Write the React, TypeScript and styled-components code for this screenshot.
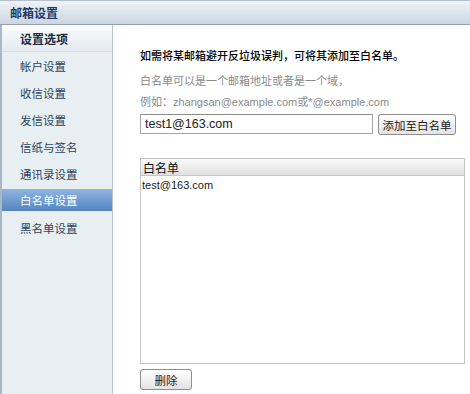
import { createGlobalStyle, styled } from 'styled-components';

const GlobalStyle = createGlobalStyle`
  html, body {
    margin: 0;
    padding: 0;
    background: #ffffff;
  }
  body {
    font-family: 'Liberation Sans', 'Noto Sans CJK SC', sans-serif;
  }
`;

const Page = styled.div`
  width: 470px;
  height: 394px;
  display: grid;
  grid-template-rows: 25px 1fr;
  overflow: hidden;
`;

const TitleBar = styled.div`
  box-sizing: border-box;
  border-top: 1px solid #b3bfca;
  border-bottom: 1px solid #949fab;
  background-color: #dae3eb;
  background-image: linear-gradient(#eef3f7, #cad6e1);
  padding-left: 10px;
  display: flex;
  align-items: center;
`;

const Title = styled.span`
  font-size: 12px;
  font-weight: bold;
  color: #1d3968;
`;

const Body = styled.div`
  display: grid;
  grid-template-columns: 113px 1fr;
  min-height: 0;
`;

const Sidebar = styled.div`
  box-sizing: border-box;
  border-left: 2px solid #a9b8c4;
  border-right: 1px solid #b7c4ce;
  background: #e8eff2;
  display: flex;
  flex-direction: column;
`;

const SideHead = styled.div`
  height: 27px;
  box-sizing: border-box;
  border-bottom: 1px solid #d3dce2;
  background: linear-gradient(#fbfcfd, #e4ebf0);
  padding-left: 18px;
  display: flex;
  align-items: center;
  font-size: 12px;
  font-weight: bold;
  color: #1c2b3b;
`;

const NavItem = styled.div<{ $active?: boolean }>`
  height: ${(p) => (p.$active ? '22px' : '27px')};
  margin: ${(p) => (p.$active ? '2px 0 3px' : '0')};
  padding-left: 18px;
  display: flex;
  align-items: center;
  font-size: 11.5px;
  color: ${(p) => (p.$active ? '#ffffff' : '#2c4360')};
  background: ${(p) => (p.$active ? 'linear-gradient(#8fb5e0, #5584c2)' : 'transparent')};
`;

const Content = styled.div`
  padding: 23px 6px 0 27px;
  display: flex;
  flex-direction: column;
`;

const Lead = styled.div`
  font-size: 11px;
  line-height: 16px;
  color: #000000;
  font-weight: 500;
  margin-bottom: 7px;
`;

const Hint = styled.div`
  font-size: 11px;
  line-height: 21px;
  color: #8a8a8a;
`;

const AddRow = styled.div`
  display: flex;
  gap: 5px;
  margin-top: 1px;
`;

const TextInput = styled.input`
  box-sizing: border-box;
  width: 233px;
  height: 20px;
  border: 1px solid #a6a6a6;
  border-top-color: #8c8c8c;
  padding: 0 4px;
  font-family: 'Liberation Sans', 'Noto Sans CJK SC', sans-serif;
  font-size: 12.5px;
  color: #222222;
  outline: none;
`;

const Button = styled.button<{ $w?: number }>`
  box-sizing: border-box;
  width: ${(p) => (p.$w ? `${p.$w}px` : 'auto')};
  height: 21px;
  padding: 0;
  white-space: nowrap;
  border: 1px solid #8d8d8d;
  border-radius: 3px;
  background: linear-gradient(#ffffff, #e3e3e3);
  font-family: 'Liberation Sans', 'Noto Sans CJK SC', sans-serif;
  font-size: 11.5px;
  color: #1a1a1a;
  cursor: pointer;
`;

const ListBox = styled.div`
  box-sizing: border-box;
  margin-top: 23px;
  width: 325px;
  height: 206px;
  border: 1px solid #c4c4c4;
  display: flex;
  flex-direction: column;
`;

const ListHead = styled.div`
  height: 17px;
  box-sizing: border-box;
  border-bottom: 1px solid #c6c6c6;
  background: linear-gradient(#fafafa, #e0e0e0);
  padding-left: 2px;
  display: flex;
  align-items: center;
  font-size: 12px;
  color: #111111;
`;

const ListItem = styled.div`
  padding: 2px 1px 0;
  font-size: 11px;
  line-height: 14px;
  color: #1a1a1a;
`;

const Footer = styled.div`
  margin-top: 5px;
`;

const navs = ['帐户设置', '收信设置', '发信设置', '信纸与签名', '通讯录设置', '白名单设置', '黑名单设置'];

export default function App() {
  return (
    <Page>
      <GlobalStyle />
      <TitleBar>
        <Title>邮箱设置</Title>
      </TitleBar>
      <Body>
        <Sidebar>
          <SideHead>设置选项</SideHead>
          {navs.map((n) => (
            <NavItem key={n} $active={n === '白名单设置'}>
              {n}
            </NavItem>
          ))}
        </Sidebar>
        <Content>
          <Lead>如需将某邮箱避开反垃圾误判，可将其添加至白名单。</Lead>
          <Hint>白名单可以是一个邮箱地址或者是一个域，</Hint>
          <Hint>例如：zhangsan@example.com或*@example.com</Hint>
          <AddRow>
            <TextInput defaultValue="test1@163.com" />
            <Button $w={78}>添加至白名单</Button>
          </AddRow>
          <ListBox>
            <ListHead>白名单</ListHead>
            <ListItem>test@163.com</ListItem>
          </ListBox>
          <Footer>
            <Button $w={52}>删除</Button>
          </Footer>
        </Content>
      </Body>
    </Page>
  );
}
